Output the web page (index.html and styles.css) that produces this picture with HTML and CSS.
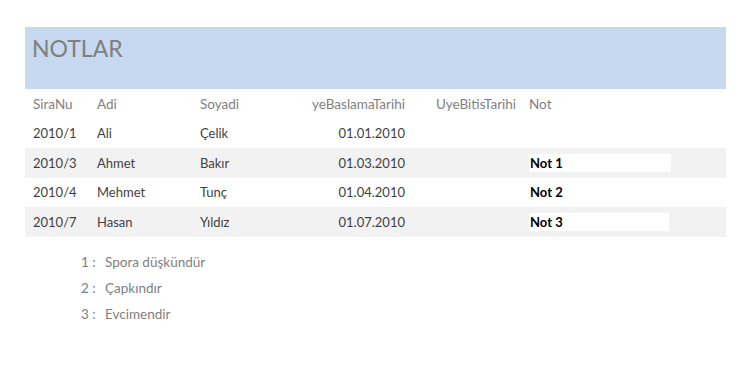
FILE: index.html
```html
<!DOCTYPE html>
<html lang="tr">
<head>
<meta charset="utf-8">
<title>NOTLAR</title>
<link rel="stylesheet" href="styles.css">
</head>
<body>
<div class="report">
  <div class="banner"><h1 class="title">NOTLAR</h1></div>
  <div class="table">
    <div class="row head">
      <div class="c c1">SiraNu</div>
      <div class="c c2">Adi</div>
      <div class="c c3">Soyadi</div>
      <div class="c c4">yeBaslamaTarihi</div>
      <div class="c c5">UyeBitisTarihi</div>
      <div class="c c6">Not</div>
    </div>
    <div class="row">
      <div class="c c1">2010/1</div>
      <div class="c c2">Ali</div>
      <div class="c c3">Çelik</div>
      <div class="c c4">01.01.2010</div>
      <div class="c c5"></div>
      <div class="c c6"></div>
    </div>
    <div class="row alt">
      <div class="c c1">2010/3</div>
      <div class="c c2">Ahmet</div>
      <div class="c c3">Bakır</div>
      <div class="c c4">01.03.2010</div>
      <div class="c c5"></div>
      <div class="c c6"><span class="note">Not 1</span></div>
    </div>
    <div class="row">
      <div class="c c1">2010/4</div>
      <div class="c c2">Mehmet</div>
      <div class="c c3">Tunç</div>
      <div class="c c4">01.04.2010</div>
      <div class="c c5"></div>
      <div class="c c6"><span class="note">Not 2</span></div>
    </div>
    <div class="row alt">
      <div class="c c1">2010/7</div>
      <div class="c c2">Hasan</div>
      <div class="c c3">Yıldız</div>
      <div class="c c4">01.07.2010</div>
      <div class="c c5"></div>
      <div class="c c6"><span class="note short">Not 3</span></div>
    </div>
  </div>
  <ul class="notes">
    <li><span class="num">1 :</span><span>Spora düşkündür</span></li>
    <li><span class="num">2 :</span><span>Çapkındır</span></li>
    <li><span class="num">3 :</span><span>Evcimendir</span></li>
  </ul>
</div>
</body>
</html>
```

FILE: styles.css
```css
html, body {
  margin: 0;
  padding: 0;
  background: #ffffff;
}
body {
  font-family: "Lato", "Open Sans", sans-serif;
  font-size: 13px;
  color: #3f3f3f;
}
.report {
  padding: 27px 0 0 25px;
  width: 701px;
}
.banner {
  height: 62px;
  background: #c6d9f0;
  padding-left: 7px;
}
.title {
  margin: 0;
  padding-top: 6px;
  font-weight: 400;
  font-size: 23px;
  line-height: 30px;
  color: #7f7f7f;
}
.row {
  display: grid;
  grid-template-columns: 72px 103px 60px 150px 118px 1fr;
  height: 29.5px;
  align-items: center;
}
.row.head {
  color: #7f7f7f;
  font-size: 13.5px;
}
.row.alt {
  background: #f2f2f2;
}
.c1 { padding-left: 8px; }
.c4 { text-align: right; padding-right: 5px; }
.c5 { padding-left: 26px; }
.c6 { padding-left: 1px; display: flex; align-items: center; }
.note {
  display: block;
  width: 141px;
  height: 18px;
  line-height: 18px;
  padding-left: 1px;
  background: #ffffff;
  color: #000000;
  font-weight: 700;
}
.note.short { width: 139px; }
.notes {
  list-style: none;
  margin: 12px 0 0;
  padding: 0 0 0 56px;
  color: #7f7f7f;
  font-size: 13.5px;
}
.notes li {
  display: flex;
  height: 26px;
  align-items: center;
}
.num {
  width: 24px;
  white-space: pre;
}
```
